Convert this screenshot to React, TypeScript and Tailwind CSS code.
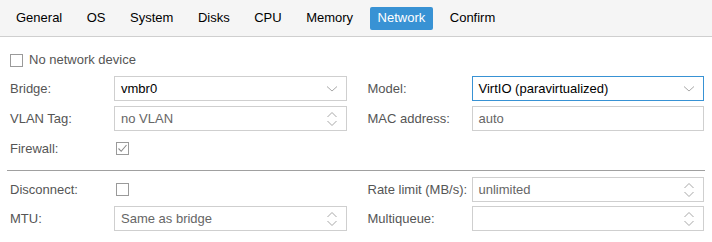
import React from 'react';

const tabs = ['General', 'OS', 'System', 'Disks', 'CPU', 'Memory', 'Network', 'Confirm'];

const ChevronDown = () => (
  <svg width="12" height="8" viewBox="0 0 12 8" className="shrink-0">
    <path d="M1 1.5 L6 6 L11 1.5" fill="none" stroke="#a8a8a8" strokeWidth="1" />
  </svg>
);

const Spinner = () => (
  <svg width="12" height="18" viewBox="0 0 12 18" className="shrink-0">
    <path d="M1.5 7 L6 2.5 L10.5 7" fill="none" stroke="#a8a8a8" strokeWidth="1" />
    <path d="M1.5 11 L6 15.5 L10.5 11" fill="none" stroke="#a8a8a8" strokeWidth="1" />
  </svg>
);

const Checkbox = ({ checked }: { checked?: boolean }) => (
  <span className="w-[13px] h-[13px] border border-[#9a9a9a] bg-white flex items-center justify-center shrink-0">
    {checked && (
      <svg width="11" height="11" viewBox="0 0 11 11">
        <path d="M1.5 5.5 L4.2 8.3 L9.5 2" fill="none" stroke="#8a8a8a" strokeWidth="1.1" />
      </svg>
    )}
  </span>
);

type FieldProps = {
  label: string;
  value?: string;
  dark?: boolean;
  kind?: 'combo' | 'spin' | 'text';
  focused?: boolean;
};

const Field = ({ label, value = '', dark, kind = 'text', focused }: FieldProps) => (
  <div className="flex items-center h-[25px]">
    <label className="w-[104px] shrink-0 text-[#555]">{label}</label>
    <div
      className={`flex-1 h-[25px] flex items-center pl-[6px] pr-[8px] border bg-white ${
        focused ? 'border-[#3892d4]' : 'border-[#cfcfcf]'
      }`}
    >
      <span className={`flex-1 ${dark ? 'text-black' : 'text-[#666]'}`}>{value}</span>
      {kind === 'combo' && <ChevronDown />}
      {kind === 'spin' && <Spinner />}
    </div>
  </div>
);

const CheckField = ({ label, checked }: { label: string; checked?: boolean }) => (
  <div className="flex items-center h-[25px]">
    <label className="w-[106px] shrink-0 text-[#555]">{label}</label>
    <Checkbox checked={checked} />
  </div>
);

export default function App() {
  return (
    <div
      className="w-[712px] h-[242px] bg-white text-[13px] overflow-hidden"
      style={{ fontFamily: '"Liberation Sans", Arial, sans-serif' }}
    >
      <div className="h-[37px] bg-[#f5f5f5] border-b border-[#cfcfcf] flex items-center pl-[8px] gap-[8.5px]">
        {tabs.map(t => (
          <div
            key={t}
            className={`h-[23px] px-[8px] flex items-center rounded-[2px] ${
              t === 'Network' ? 'bg-[#3892d4] text-white' : 'text-black'
            }`}
          >
            {t}
          </div>
        ))}
      </div>

      <div className="pl-[10px] pr-[8px] pt-[16px]">
        <div className="flex items-center gap-[6px] h-[14px] text-[#555]">
          <Checkbox />
          <span>No network device</span>
        </div>

        <div className="grid grid-cols-2 gap-x-[21px] gap-y-[5px] mt-[9px]">
          <Field label="Bridge:" value="vmbr0" dark kind="combo" />
          <Field label="Model:" value="VirtIO (paravirtualized)" dark kind="combo" focused />
          <Field label="VLAN Tag:" value="no VLAN" kind="spin" />
          <Field label="MAC address:" value="auto" />
          <CheckField label="Firewall:" checked />
          <div />
        </div>

        <div className="border-t border-[#a0a0a0] mt-[9px] -ml-[3px] mr-[-1px]" />

        <div className="grid grid-cols-2 gap-x-[21px] gap-y-[4px] mt-[6px]">
          <CheckField label="Disconnect:" />
          <Field label="Rate limit (MB/s):" value="unlimited" kind="spin" />
          <Field label="MTU:" value="Same as bridge" kind="spin" />
          <Field label="Multiqueue:" kind="spin" />
        </div>
      </div>
    </div>
  );
}
